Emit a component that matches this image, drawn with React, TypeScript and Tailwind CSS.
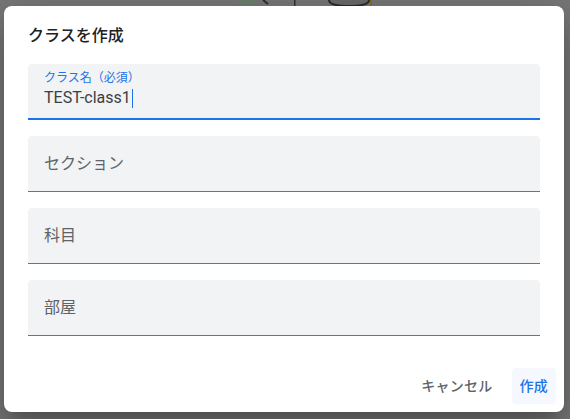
import React from "react";

const font = { fontFamily: 'Roboto, "Noto Sans CJK JP", "Noto Sans", sans-serif' };

function Field({ label }: { label: string }) {
  return (
    <div className="h-[56px] rounded-t-[4px] bg-[#f1f3f4] border-b border-[#6f7378] flex items-center px-4">
      <span className="text-[16px] leading-6 text-[#5f6368]">{label}</span>
    </div>
  );
}

export default function App() {
  return (
    <div className="relative w-[570px] h-[419px] overflow-hidden bg-[#777777]" style={font}>
      <svg className="absolute left-0 top-0" width="570" height="12" viewBox="0 0 570 12">
        <path d="M238 0 H258 L250 7 H238 Z" fill="#6e7e6e" />
        <path d="M263 0 L268 4" stroke="#2e2e2e" strokeWidth="2" />
        <rect x="294" y="0" width="1.5" height="8" fill="#333" />
        <path d="M329 0 Q329 6 349 6 Q369 6 369 0" fill="#6a6a6a" stroke="#2a2a2a" strokeWidth="2" />
        <rect x="370" y="0" width="2" height="6" fill="#8a6a20" />
      </svg>
      <div className="absolute left-[4px] top-[6px] w-[560px] bg-white rounded-[8px] shadow-[0_11px_15px_-7px_rgba(0,0,0,0.2),0_24px_38px_3px_rgba(0,0,0,0.14),0_9px_46px_8px_rgba(0,0,0,0.12)] flex flex-col">
        <div className="px-6 pt-[18px]">
          <h2 className="text-[16px] leading-6 font-medium text-[#202124]">クラスを作成</h2>
        </div>
        <div className="px-6 mt-4 flex flex-col gap-4">
          <div className="h-[56px] rounded-t-[4px] bg-[#f1f3f4] border-b-2 border-[#1a73e8] px-4 pt-[6px] flex flex-col">
            <span className="text-[12px] leading-4 text-[#1a73e8]">クラス名（必須）</span>
            <div className="flex items-center text-[16px] leading-6 text-[#3c4043]">
              <span>TEST-class1</span>
              <span className="inline-block w-[1.5px] h-[19px] bg-[#1a73e8] ml-[1px]" />
            </div>
          </div>
          <Field label="セクション" />
          <Field label="科目" />
          <Field label="部屋" />
        </div>
        <div className="mt-8 pr-2 pb-2 flex justify-end items-center gap-[11px]">
          <button className="h-9 px-2 rounded-[4px] text-[14px] font-medium text-[#5f6368] tracking-[0.25px]">キャンセル</button>
          <button className="h-9 px-2 rounded-[4px] bg-[#f5f8fe] text-[14px] font-medium text-[#1a73e8] tracking-[0.25px]">作成</button>
        </div>
      </div>
    </div>
  );
}
